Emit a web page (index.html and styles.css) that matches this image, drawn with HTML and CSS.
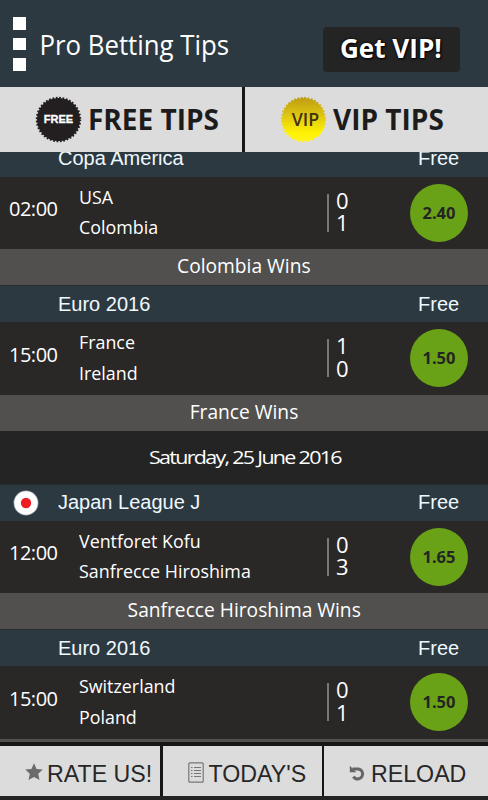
FILE: index.html
```html
<!DOCTYPE html>
<html lang="en">
<head>
<meta charset="utf-8">
<title>Pro Betting Tips</title>
<link rel="stylesheet" href="styles.css">
</head>
<body>
<div class="app">
  <header class="header">
    <div class="menu"><i></i><i></i><i></i></div>
    <h1 class="title"><span>Pro Betting Tips</span></h1>
    <button class="get-vip"><span>Get VIP!</span></button>
  </header>
  <nav class="tabs">
    <div class="tab">
      <svg class="badge" viewBox="0 0 48 48"><circle cx="24" cy="24" r="22" fill="#231f20"/><circle cx="24" cy="24" r="22" fill="none" stroke="#231f20" stroke-width="2.4" stroke-dasharray="1.8 1.656"/><text x="24" y="28" text-anchor="middle" textLength="30" lengthAdjust="spacingAndGlyphs" class="badge-free">FREE</text></svg>
      <span class="tab-label">FREE TIPS</span>
    </div>
    <div class="tab">
      <svg class="badge" viewBox="0 0 48 48"><defs><linearGradient id="gold" gradientUnits="userSpaceOnUse" x1="0" y1="1" x2="0" y2="47"><stop offset="0" stop-color="#bd9b12"/><stop offset=".45" stop-color="#e2ca11"/><stop offset=".8" stop-color="#fff203"/><stop offset="1" stop-color="#fff41c"/></linearGradient></defs><circle cx="24" cy="24" r="22" fill="url(#gold)"/><circle cx="24" cy="24" r="22" fill="none" stroke="url(#gold)" stroke-width="2.4" stroke-dasharray="1.8 1.656"/><text x="26" y="30.7" text-anchor="middle" textLength="28" lengthAdjust="spacingAndGlyphs" class="badge-vip">VIP</text></svg>
      <span class="tab-label">VIP TIPS</span>
    </div>
  </nav>
  <main class="list">
    <div class="league first"><div class="flag"></div><span class="name">Copa America</span><span class="free">Free</span></div>
    <div class="match">
      <span class="time">02:00</span>
      <div class="teams"><span>USA</span><span>Colombia</span></div>
      <div class="score"><span>0</span><span>1</span></div>
      <div class="odds">2.40</div>
    </div>
    <div class="result"><span>Colombia Wins</span></div>

    <div class="league"><div class="flag"></div><span class="name">Euro 2016</span><span class="free">Free</span></div>
    <div class="match">
      <span class="time">15:00</span>
      <div class="teams"><span>France</span><span>Ireland</span></div>
      <div class="score"><span>1</span><span>0</span></div>
      <div class="odds">1.50</div>
    </div>
    <div class="result"><span>France Wins</span></div>

    <div class="date"><span>Saturday, 25 June 2016</span></div>

    <div class="league"><div class="flag"><svg viewBox="0 0 26 26"><circle cx="13" cy="13" r="12.5" fill="#9aa3a8"/><circle cx="13" cy="13" r="11.7" fill="#fff"/><circle cx="13" cy="13" r="5.2" fill="#ed1c24"/></svg></div><span class="name">Japan League J</span><span class="free">Free</span></div>
    <div class="match">
      <span class="time">12:00</span>
      <div class="teams"><span>Ventforet Kofu</span><span>Sanfrecce Hiroshima</span></div>
      <div class="score"><span>0</span><span>3</span></div>
      <div class="odds">1.65</div>
    </div>
    <div class="result"><span>Sanfrecce Hiroshima Wins</span></div>

    <div class="league"><div class="flag"></div><span class="name">Euro 2016</span><span class="free">Free</span></div>
    <div class="match">
      <span class="time">15:00</span>
      <div class="teams"><span>Switzerland</span><span>Poland</span></div>
      <div class="score"><span>0</span><span>1</span></div>
      <div class="odds">1.50</div>
    </div>
    <div class="result"></div>
  </main>
  <footer class="footer">
    <div class="action rate"><svg class="star" viewBox="0 0 18 18"><path fill="#6b6b6b" d="M9 .2l2.600 5.700 6.200.7-4.600 4.200 1.300 6.200L9 13.900l-5.500 3.100 1.300-6.200L.2 6.600l6.200-.7z"/></svg><span>RATE US!</span></div>
    <div class="action today"><svg class="doc" viewBox="0 0 16 21"><rect x=".8" y=".8" width="14.400" height="19.400" rx="1" fill="none" stroke="#777" stroke-width="1.200"/><path d="M3 5.500h1.500M3 8.500h1.500M3 11.500h1.500M3 14.500h1.500M6 5.500h7M6 8.500h7M6 11.500h7M6 14.500h7" stroke="#777" stroke-width="1.200"/></svg><span>TODAY'S</span></div>
    <div class="action reload"><svg class="arrow" viewBox="0 0 16 16"><path d="M3 4H8.500a5 5 0 1 1-4.600 7.600" fill="none" stroke="#666" stroke-width="3"/><path d="M.3.800v6.500h6.500z" fill="#666"/></svg><span>RELOAD</span></div>
  </footer>
</div>
</body>
</html>
```

FILE: styles.css
```css
* { box-sizing: border-box; }

body {
  margin: 0;
  background: #242424;
  font-family: "Open Sans", "Noto Sans", sans-serif;
  color: #fff;
}

.app {
  width: 488px;
  height: 800px;
  overflow: hidden;
  display: flex;
  flex-direction: column;
}

.header {
  height: 87px;
  flex: none;
  display: flex;
  background: #2d3941;
  padding-left: 13px;
}

.menu {
  width: 27px;
  padding-top: 17px;
  display: flex;
  flex-direction: column;
  gap: 8px;
}

.menu i {
  width: 13px;
  height: 12.5px;
  background: #fff;
}

.title {
  margin: 25px 0 0;
  width: 283px;
  font-size: 27px;
  font-weight: 400;
  line-height: 40px;
  white-space: nowrap;
}

.title span,
.get-vip span {
  display: inline-block;
  transform-origin: 0 50%;
}

.title span { transform: translateX(-.5px) scaleX(.955); }

.get-vip {
  width: 137px;
  height: 45px;
  margin: 27px 0 0;
  padding: 0 0 0 17px;
  border: 0;
  border-radius: 4px;
  background: #242424;
  color: #fff;
  font: 700 27px/40px "Open Sans", sans-serif;
  text-align: left;
  white-space: nowrap;
  text-shadow: 0 0 3px #000, 1px 1px 2px #000;
}

.get-vip span { transform: translateY(-2px) scaleX(.965); }

.tabs {
  height: 65px;
  flex: none;
  display: grid;
  grid-template-columns: 242px 243px;
  gap: 3px;
  background: #171717;
}

.tab {
  display: flex;
  align-items: center;
  background: #dcdcdc;
  padding-left: 35px;
}

.badge {
  width: 47px;
  height: 47px;
  flex: none;
}

.badge-free { font: 700 11px "Liberation Sans", sans-serif; fill: #fff; stroke: #fff; stroke-width: .3; }
.badge-vip { font: 600 18px "Open Sans", sans-serif; fill: #3d3210; }

.tab-label {
  color: #1c1c1c;
  font-size: 28px;
  font-weight: 700;
  line-height: 40px;
  margin: -2px 0 0 6px;
  white-space: nowrap;
}

.list {
  height: 590px;
  flex: none;
  overflow: hidden;
  background: #242424;
}

.league {
  height: 37px;
  display: flex;
  align-items: center;
  background: #2d3941;
  border-top: 1px solid #252a2d;
  font-family: "Liberation Sans", sans-serif;
  font-size: 20px;
  color: #eff8ff;
}

.league.first { margin-top: -12.5px; }

.flag { width: 58px; height: 26px; padding-left: 12.5px; }
.flag svg { width: 26px; height: 26px; display: block; }
.name { width: 360px; }

.match {
  height: 72.5px;
  display: flex;
  background: #2a2727;
}

.time {
  width: 79px;
  padding: 18.5px 0 0 9px;
  font-size: 20px;
  line-height: 28px;
  letter-spacing: -.5px;
}

.teams {
  width: 248px;
  padding-top: 5px;
  display: flex;
  flex-direction: column;
  font-size: 18.700px;
  line-height: 30.5px;
  white-space: nowrap;
}

.teams span { transform: scaleX(.955); transform-origin: 0 50%; }

.score {
  width: 83px;
  height: 38px;
  margin-top: 17px;
  border-left: 2.5px solid #777;
  padding-left: 7px;
  display: flex;
  flex-direction: column;
  font-size: 22px;
  line-height: 22.5px;
}

.score span:first-child { margin-top: -5px; }

.odds {
  width: 58px;
  height: 58px;
  margin-top: 7px;
  border-radius: 50%;
  background: #69a217;
  color: #242424;
  font-size: 16.5px;
  font-weight: 700;
  line-height: 57px;
  text-align: center;
}

.result {
  height: 36px;
  background: #51504e;
  text-align: center;
  font-size: 19.8px;
  line-height: 34.5px;
  white-space: nowrap;
}

.result span { display: inline-block; transform: scaleX(.97); }

.date {
  height: 53px;
  background: #242424;
  text-align: center;
  font-size: 19px;
  line-height: 53px;
  letter-spacing: -1.5px;
}

.date span { display: inline-block; transform: translateX(1px) scaleX(1.13); }

.footer {
  height: 54px;
  flex: none;
  padding-top: 4px;
  display: grid;
  grid-template-columns: 160px 159px 164px;
  column-gap: 2.5px;
  background: #171717;
}

.action {
  height: 50px;
  display: flex;
  background: #dcdcdc;
  color: #272727;
  font-family: "Liberation Sans", sans-serif;
  font-size: 23.2px;
  line-height: 56px;
  white-space: nowrap;
}

.rate { padding-left: 25px; }
.today { padding-left: 25px; }
.reload { padding-left: 25px; }
.star { width: 18px; height: 18px; margin: 17px 4px 0 0; }
.doc { width: 16px; height: 21px; margin: 16px 5px 0 0; }
.arrow { width: 17px; height: 16px; margin: 19px 5px 0 0; }
```
